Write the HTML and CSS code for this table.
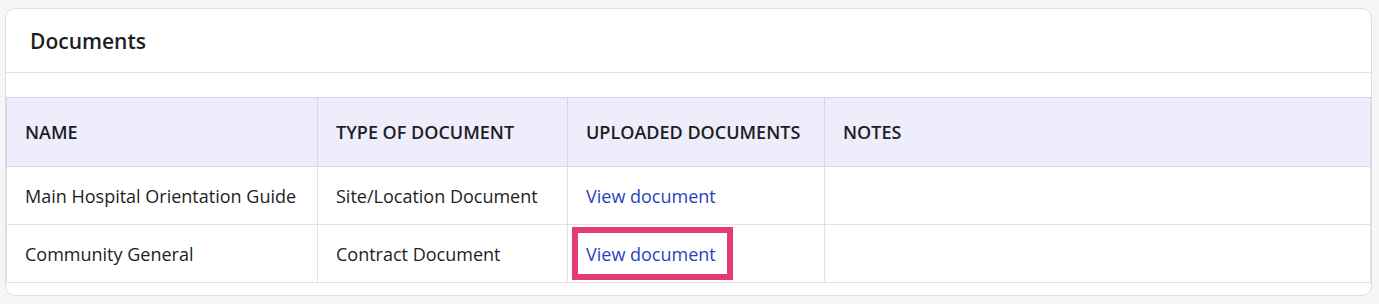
FILE: index.html
```html
<!DOCTYPE html>
<html lang="en">
<head>
<meta charset="utf-8">
<title>Documents</title>
<link rel="stylesheet" href="styles.css">
</head>
<body>
  <section class="card">
    <header class="card-header">
      <h2 class="card-title">Documents</h2>
    </header>
    <div class="card-body">
      <table class="doc-table">
        <colgroup>
          <col class="col-name">
          <col class="col-type">
          <col class="col-upload">
          <col class="col-notes">
        </colgroup>
        <thead>
          <tr>
            <th>Name</th>
            <th>Type of document</th>
            <th>Uploaded documents</th>
            <th>Notes</th>
          </tr>
        </thead>
        <tbody>
          <tr>
            <td>Main Hospital Orientation Guide</td>
            <td>Site/Location Document</td>
            <td><a class="doc-link" href="#">View document</a></td>
            <td></td>
          </tr>
          <tr>
            <td>Community General</td>
            <td>Contract Document</td>
            <td><a class="doc-link is-highlighted" href="#">View document</a></td>
            <td></td>
          </tr>
        </tbody>
      </table>
    </div>
  </section>
</body>
</html>
```
FILE: styles.css
```css
* { box-sizing: border-box; }

html, body {
  margin: 0;
  background: #f6f6f6;
}

body {
  padding: 8px 7px 0 5px;
  font-family: "Open Sans", "Liberation Sans", sans-serif;
  color: #1e1e1e;
}

.card {
  background: #ffffff;
  border: 1px solid #dedede;
  border-radius: 10px;
  padding-bottom: 12px;
}

.card-header {
  height: 64px;
  display: flex;
  align-items: center;
  padding: 0 24px;
  border-bottom: 1px solid #e2e2e2;
}

.card-title {
  margin: 0;
  font-size: 21px;
  font-weight: 600;
  color: #1e1e1e;
}

.card-body {
  padding-top: 24px;
}

.doc-table {
  width: 100%;
  border-collapse: collapse;
  table-layout: fixed;
  font-size: 18px;
}

.col-name { width: 311px; }
.col-type { width: 250px; }
.col-upload { width: 257px; }

.doc-table th,
.doc-table td {
  text-align: left;
  padding: 0 18px;
  border: 1px solid #e2e2e2;
  vertical-align: middle;
}

.doc-table th {
  height: 69px;
  background: #eeedfc;
  border-color: #d7d5ee;
  font-weight: 600;
  font-size: 18px;
  text-transform: uppercase;
  color: #1e1e1e;
}

.doc-table td {
  height: 58px;
}

.doc-table tbody tr:first-child td {
  border-top-color: #d7d5ee;
}

.doc-link {
  position: relative;
  display: inline-block;
  line-height: 24px;
  color: #2d3fc0;
  text-decoration: none;
}

.doc-link.is-highlighted::after {
  content: "";
  position: absolute;
  left: -14px;
  right: -17px;
  top: -15px;
  bottom: -14px;
  border: 6px solid #e33b78;
  pointer-events: none;
}
```
